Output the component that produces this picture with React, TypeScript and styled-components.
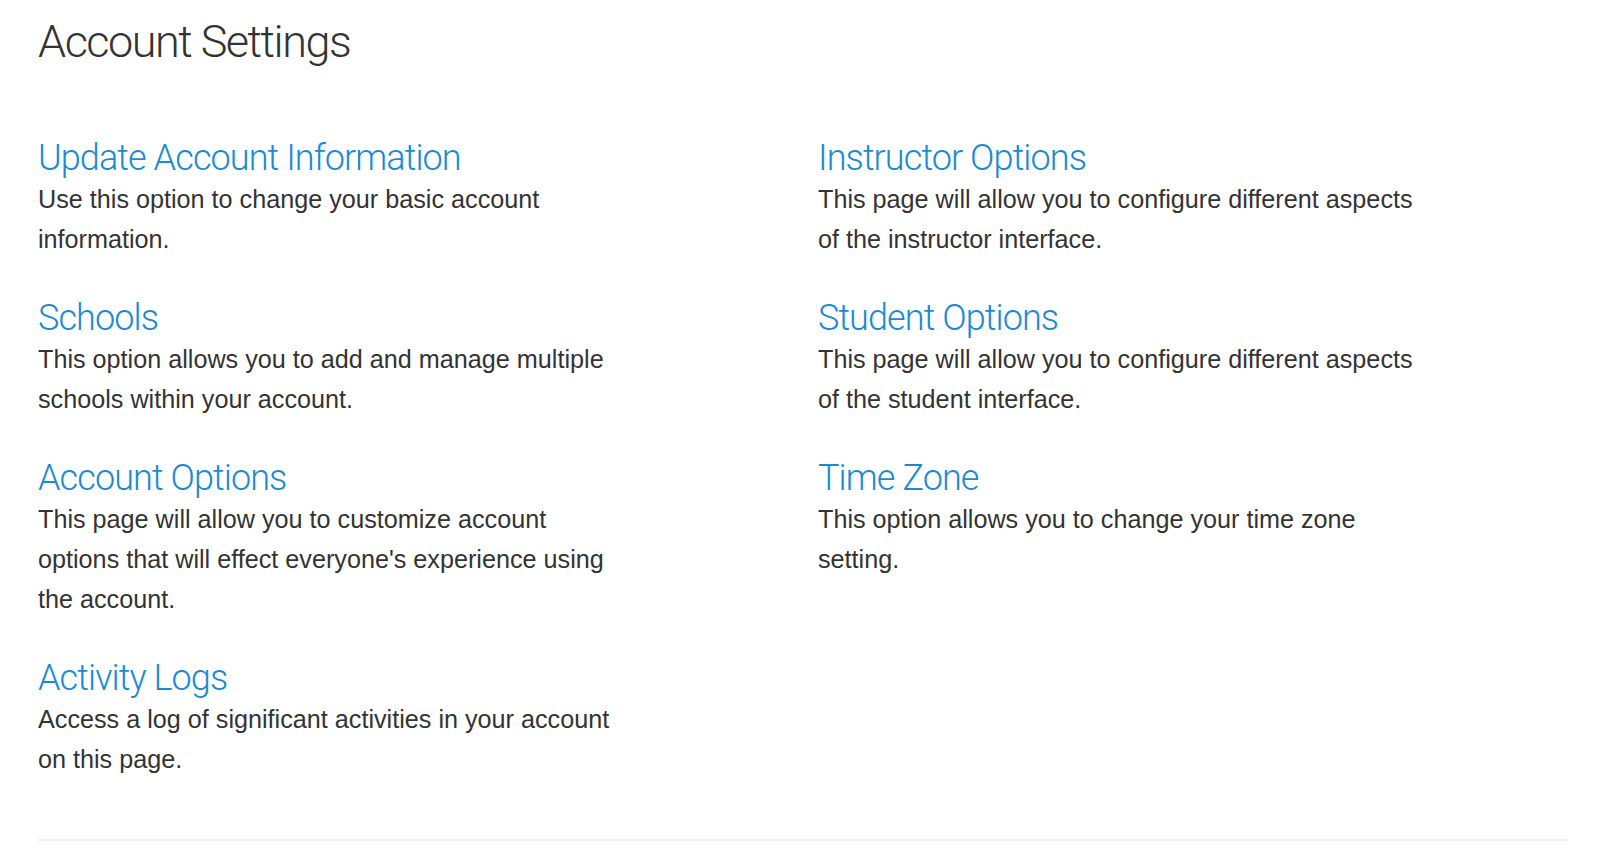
import React from 'react';
import styled, {createGlobalStyle} from 'styled-components';

interface SettingOption {
	title: string;
	text: string;
}

// the lines break where the original page breaks them
const leftOptions: SettingOption[] = [
	{
		title: 'Update Account Information',
		text: 'Use this option to change your basic account\ninformation.',
	},
	{
		title: 'Schools',
		text: 'This option allows you to add and manage multiple\nschools within your account.',
	},
	{
		title: 'Account Options',
		text: "This page will allow you to customize account\noptions that will effect everyone's experience using\nthe account.",
	},
	{
		title: 'Activity Logs',
		text: 'Access a log of significant activities in your account\non this page.',
	},
];

const rightOptions: SettingOption[] = [
	{
		title: 'Instructor Options',
		text: 'This page will allow you to configure different aspects\nof the instructor interface.',
	},
	{
		title: 'Student Options',
		text: 'This page will allow you to configure different aspects\nof the student interface.',
	},
	{
		title: 'Time Zone',
		text: 'This option allows you to change your time zone\nsetting.',
	},
];

const GlobalStyle = createGlobalStyle`
	html, body {
		margin: 0;
		padding: 0;
		background: #ffffff;
	}
	body {
		font-family: 'Liberation Sans', Arial, sans-serif;
		color: #333333;
	}
`;

const App: React.FC = () => {
	return (
		<Page>
			<GlobalStyle />
			<Title>Account Settings</Title>
			<Columns>
				<Column>
					{leftOptions.map((option) => (
						<Option key={option.title}>
							<OptionLink href="#">{option.title}</OptionLink>
							<OptionText>{option.text}</OptionText>
						</Option>
					))}
				</Column>
				<Column>
					{rightOptions.map((option) => (
						<Option key={option.title}>
							<OptionLink href="#">{option.title}</OptionLink>
							<OptionText>{option.text}</OptionText>
						</Option>
					))}
				</Column>
			</Columns>
			<Divider />
		</Page>
	);
};

export default App;

const Page = styled.div`
	padding: 17px 40px 0 38px;
	min-height: 856px;
	box-sizing: border-box;
`;

const Title = styled.h1`
	margin: 0;
	font-family: Roboto, 'Liberation Sans', sans-serif;
	font-weight: 300;
	font-size: 45px;
	line-height: 50px;
	letter-spacing: -1.5px;
	color: #333333;
`;

const Columns = styled.div`
	display: grid;
	grid-template-columns: 1fr 1fr;
	column-gap: 30px;
	margin-top: 70px;
`;

const Column = styled.div`
	display: flex;
	flex-direction: column;
`;

const Option = styled.div`
	display: flex;
	flex-direction: column;
	align-items: flex-start;
	margin-bottom: 38px;
`;

const OptionLink = styled.a`
	font-family: Roboto, 'Liberation Sans', sans-serif;
	font-weight: 300;
	font-size: 36px;
	line-height: 42px;
	letter-spacing: -0.9px;
	color: #1b8ad3;
	text-decoration: none;
`;

const OptionText = styled.p`
	margin: 0;
	font-size: 25.2px;
	line-height: 40px;
	color: #333333;
	white-space: pre-line;
`;

const Divider = styled.hr`
	margin: 22px 0 0;
	border: 0;
	border-top: 2px solid #eeeeee;
`;
